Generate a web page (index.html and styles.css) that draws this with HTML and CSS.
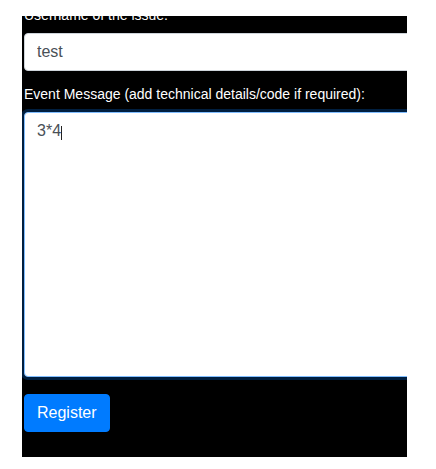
FILE: index.html
```html
<!DOCTYPE html>
<html>
<head>
<meta charset="utf-8">
<link rel="stylesheet" href="styles.css">
</head>
<body>
<div class="panel">
  <form class="form">
    <div class="group first">
      <label class="label">Username of the issue:</label>
      <input class="field" type="text" value="test">
    </div>
    <div class="group second">
      <label class="label">Event Message (add technical details/code if required):</label>
      <div class="area-wrap">
        <textarea class="field area">3*4</textarea>
        <span class="caret"></span>
      </div>
    </div>
    <button class="btn" type="button">Register</button>
  </form>
</div>
</body>
</html>
```
FILE: styles.css
```css
html, body {
  margin: 0;
  padding: 0;
  background: #fff;
}
body {
  padding: 16px 0 0 22px;
  font-family: "Liberation Sans", Arial, sans-serif;
}
.panel {
  width: 385px;
  height: 441px;
  background: #000;
  overflow: hidden;
  box-sizing: border-box;
  padding-left: 2px;
}
.form {
  display: flex;
  flex-direction: column;
  align-items: flex-start;
}
.group {
  display: flex;
  flex-direction: column;
}
.first {
  margin-top: -11px;
}
.second {
  margin-top: 13px;
}
.label {
  display: block;
  color: #fff;
  font-size: 14px;
  line-height: 21px;
  margin-bottom: 7px;
}
.field {
  box-sizing: border-box;
  width: 520px;
  height: 38px;
  margin: 0;
  padding: 6px 12px;
  font-family: "Liberation Sans", Arial, sans-serif;
  font-size: 16px;
  line-height: 24px;
  color: #495057;
  background: #fff;
  border: 1px solid #ced4da;
  border-radius: 4px;
  outline: none;
}
.area-wrap {
  position: relative;
  margin-left: 0;
}
.area {
  display: block;
  height: 265px;
  resize: none;
  border-color: #80bdff;
  box-shadow: 0 0 0 3px rgba(0, 123, 255, 0.25);
}
.caret {
  position: absolute;
  left: 37px;
  top: 14px;
  width: 1px;
  height: 14px;
  background: #222;
}
.btn {
  margin-top: 17px;
  height: 38px;
  padding: 6px 12px;
  font-family: "Liberation Sans", Arial, sans-serif;
  font-size: 16px;
  line-height: 24px;
  color: #fff;
  background: #007bff;
  border: 1px solid #007bff;
  border-radius: 4px;
}
```
